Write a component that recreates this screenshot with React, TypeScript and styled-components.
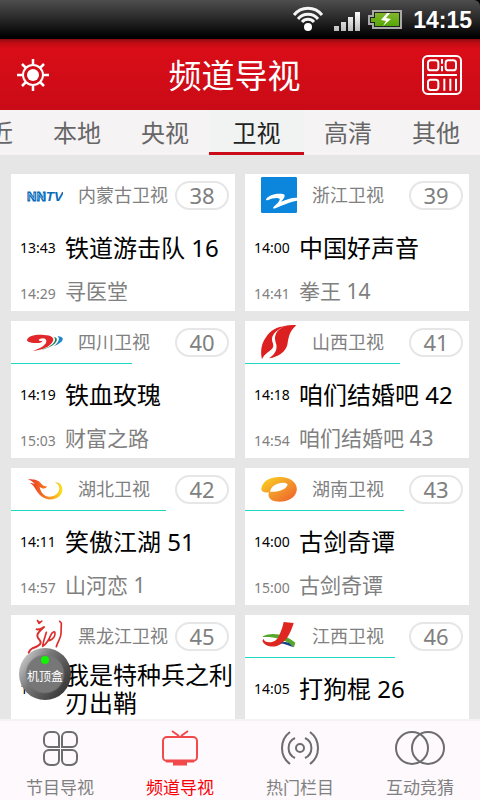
import React from "react";
import styled, { createGlobalStyle, css } from "styled-components";

const GlobalStyle = createGlobalStyle`
  * { box-sizing: border-box; }
  body { margin: 0; background: #e6e6e6; }
  button { border: 0; padding: 0; background: none; color: inherit; font: inherit; cursor: pointer; }
  svg { display: block; }
`;

const Shell = styled.div`
  position: relative;
  display: flex;
  flex-direction: column;
  height: 100vh;
  overflow: hidden;
  background: #e6e6e6;
  font-family: "Noto Sans", "Noto Sans CJK SC", sans-serif;
`;

const StatusFrame = styled.div`
  flex: none;
  background: #000;
`;

const StatusBar = styled.div`
  display: flex;
  align-items: center;
  justify-content: flex-end;
  height: 39px;
  padding-right: 8px;
  border-top-right-radius: 6px;
  background: linear-gradient(#4e4e4e, #2b2b2b 45%, #000 95%);
  color: #fff;
`;

const StatusIcons = styled.svg`
  width: 124px;
  height: 39px;
`;

const Clock = styled.time`
  font: bold 23px/38px "Liberation Sans", sans-serif;
`;

const Header = styled.header`
  display: flex;
  flex: none;
  align-items: center;
  height: 71px;
  padding: 0 18px 0 16px;
  background: linear-gradient(#8c0910, #c20c15 4px, #d90d17 10px, #c90b17);
  color: #fff;
`;

const HeaderButton = styled.button`
  flex: none;
`;

const Title = styled.h1`
  flex: 1;
  margin: 0;
  padding: 2px 3px 0 0;
  text-align: center;
  font-size: 33px;
  line-height: 40px;
  font-weight: 400;
`;

const Tabs = styled.nav`
  display: flex;
  flex: none;
  justify-content: flex-end;
  height: 45px;
  overflow: hidden;
  background: #f6f3f5;
`;

const Tab = styled.button<{ $active?: boolean }>`
  flex: 0 0 18.33%;
  padding-top: 4px;
  border-bottom: 3px solid transparent;
  color: #666;
  font-size: 24px;
  line-height: 38px;
  white-space: nowrap;
  ${(p) =>
    p.$active &&
    css`
      flex-basis: 19.8%;
      border-bottom-color: #cc0b1a;
      background: #f1f2f2;
      color: #222;
    `}
`;

const Channels = styled.main`
  display: grid;
  flex: 1;
  grid-template-columns: 1fr 1fr;
  grid-auto-rows: max-content;
  gap: 10px;
  min-height: 0;
  padding: 19px 11px 0;
  overflow-y: auto;
  scrollbar-width: none;
`;

const Card = styled.article`
  background: #fff;
`;

const CardHead = styled.div`
  display: flex;
  align-items: center;
  height: 42px;
  padding: 0 6px 0 16px;
`;

const Logo = styled.svg`
  flex: none;
  width: 36px;
  height: 36px;
  margin-right: 15px;
`;

const ChannelName = styled.h2`
  flex: 1;
  margin: 0;
  color: #808080;
  font-size: 18px;
  line-height: 26px;
  font-weight: 400;
  white-space: nowrap;
`;

const ChannelNumber = styled.span`
  width: 54px;
  border: 2px solid #e6e6e6;
  border-radius: 15px;
  color: #808080;
  font-size: 22px;
  line-height: 25px;
  text-align: center;
`;

const Progress = styled.div`
  height: 1px;
`;

const ProgressFill = styled.div`
  height: 1px;
  background: #1fd6c0;
`;

const Current = styled.div`
  display: grid;
  grid-template-columns: 45px 1fr;
  align-items: center;
  height: 62px;
  padding-left: 9px;
  color: #000;
  font-size: 24px;
  line-height: 28px;
`;

const Next = styled(Current)`
  align-items: baseline;
  height: 32px;
  color: #808080;
  font-size: 21px;
  line-height: 24px;
`;

const AirTime = styled.time`
  font-size: 14px;
`;

const BottomNav = styled.nav`
  display: grid;
  flex: none;
  grid-template-columns: repeat(4, 1fr);
  height: 81px;
  border-top: 2px solid #f5f1f4;
  background: #fdf9fd;
`;

const NavItem = styled.button<{ $active?: boolean }>`
  display: flex;
  flex-direction: column;
  align-items: center;
  gap: 8px;
  padding-top: 7px;
  color: ${(p) => (p.$active ? "#fa0005" : "#808080")};
  font-size: 17px;
  line-height: 24px;
`;

const NavIcon = styled.svg`
  width: 52px;
  height: 40px;
  fill: none;
  stroke: #6d6d6d;
  stroke-width: 2;
`;

const BoxButton = styled.button`
  position: absolute;
  bottom: 100px;
  left: 19px;
  display: flex;
  align-items: center;
  justify-content: center;
  width: 52px;
  height: 52px;
  padding-top: 4px;
  border-radius: 50%;
  background: radial-gradient(circle, #777 0 18px, transparent 20px),
    linear-gradient(125deg, #d8d8d8 5%, #777 40%, #333 90%);
  color: #fff;
  font-size: 12px;
  white-space: nowrap;

  &::before {
    content: "";
    position: absolute;
    top: 8px;
    left: 22px;
    width: 8px;
    height: 8px;
    border-radius: 50%;
    background: #12f500;
  }
`;

const logos: Record<string, React.ReactNode> = {
  nmg: (
    <g fontFamily="Liberation Sans, sans-serif" fontWeight="bold" fill="#0b6bb8">
      <text x="0" y="71" fontSize="39" stroke="#0b6bb8" strokeWidth="3">
        NN
      </text>
      <text x="56" y="71" fontSize="41" fontStyle="italic">
        TV
      </text>
      <path d="M6 68V48l17 20V48M33 68V48l17 20V48" fill="none" stroke="#b8dcf2" strokeWidth="2" />
    </g>
  ),
  zj: (
    <>
      <rect width="108" height="108" rx="4" fill="#0c86dc" />
      <path
        d="M15 67C25 52 48 49 66 51C77 54 68 66 60 74C78 67 92 61 108 62V71C86 75 69 83 43 94C35 96 34 92 41 86C49 80 57 71 56 65C48 61 31 65 22 69C17 70 14 70 15 67Z"
        fill="#fff"
      />
    </>
  ),
  sc: (
    <>
      <path
        d="M0 49C2 34 30 31 50 33C74 33 85 43 76 55C68 68 48 78 16 81C35 75 56 65 58 53C59 43 49 40 38 45C31 49 38 52 47 50C42 59 25 58 14 56C6 55 1 53 0 49Z"
        fill="#e2272a"
      />
      <path d="M79 38C89 43 84 55 72 64C65 70 54 74 43 77C65 73 84 62 89 50C92 42 86 39 79 38Z" fill="#197f55" />
      <path d="M91 37C101 43 94 56 80 67C96 60 109 51 107 43C105 38 97 36 91 37Z" fill="#2287c6" />
    </>
  ),
  sx: (
    <>
      <path
        d="M3 106C-3 84 1 56 16 38C28 20 48 8 74 6C50 15 33 30 33 46C33 55 39 61 36 70C32 80 10 88 3 106Z"
        fill="#dc2020"
      />
      <path
        d="M106 4C78 -1 54 10 45 29C39 43 43 50 46 62C49 77 41 92 24 103C53 98 74 83 79 62C83 40 85 21 106 4Z"
        fill="#dc2020"
      />
    </>
  ),
  hb: (
    <>
      <defs>
        <linearGradient id="flame">
          <stop stopColor="#e62b23" />
          <stop offset=".5" stopColor="#f57923" />
          <stop offset="1" stopColor="#f9e317" />
        </linearGradient>
      </defs>
      <path
        d="M2 25C16 25 29 25 38 33C45 42 51 47 61 46C56 56 45 53 38 48C41 64 51 77 68 77C91 76 103 57 94 42C91 38 87 36 83 36C96 31 107 43 106 58C104 78 84 88 63 85C41 81 32 65 22 49C18 42 14 39 9 36C14 36 19 38 23 39C17 31 11 28 2 25Z"
        fill="url(#flame)"
      />
    </>
  ),
  hn: (
    <>
      <defs>
        <linearGradient id="mango" x2="1" y2="1">
          <stop stopColor="#fbd61d" />
          <stop offset=".5" stopColor="#f3992b" />
          <stop offset="1" stopColor="#ee5b2c" />
        </linearGradient>
      </defs>
      <path
        d="M1 54C3 30 29 17 58 18C89 18 111 36 107 59C103 82 74 96 43 91C27 88 19 77 24 63C13 67 1 63 1 54ZM27 62C47 63 73 59 80 41C77 33 62 34 50 38C37 42 29 50 27 62Z"
        fill="url(#mango)"
        fillRule="evenodd"
      />
    </>
  ),
  hlj: (
    <g fill="none" stroke="#db302d" strokeLinecap="round" strokeLinejoin="round">
      <path d="M31 7l6 6 8-4-9 8z" strokeWidth="4" />
      <path d="M29 34c8 1 15-2 22-7-9 8-19 15-20 25-1 12 15 16 9 25-5 8-17 11-24 14-7 3-9 7-11 13" strokeWidth="6" />
      <path d="M58 43c-4 15-10 28-11 42 13-9 19-20 24-33 5-10 13-14 13-6 0 11-8 19-18 22" strokeWidth="5" />
      <path d="M98 10l5 6-1 32c-1 13-10 23-14 38" strokeWidth="5" />
    </g>
  ),
  jx: (
    <>
      <path d="M6 55C33 41 73 49 103 74L99 88C74 63 42 56 5 57Z" fill="#55a82c" />
      <path d="M19 80C50 80 58 54 65 34L70 14L76 15C72 61 54 92 19 80Z" fill="#2360a5" />
      <path
        d="M68 12L98 15C88 50 65 95 23 84C10 80 -1 68 8 63C9 76 43 80 54 53C61 38 66 24 68 12Z"
        fill="#df2722"
      />
      <path d="M56 76C70 77 83 83 98 88L87 77C77 71 67 71 56 76Z" fill="#193f85" />
    </>
  ),
};

interface Channel {
  logo: string;
  name: string;
  number: number;
  progress?: number;
  now: [string, string];
  next?: [string, string];
}

const channels: Channel[] = [
  { logo: "nmg", name: "内蒙古卫视", number: 38, now: ["13:43", "铁道游击队 16"], next: ["14:29", "寻医堂"] },
  { logo: "zj", name: "浙江卫视", number: 39, now: ["14:00", "中国好声音"], next: ["14:41", "拳王 14"] },
  { logo: "sc", name: "四川卫视", number: 40, progress: 54, now: ["14:19", "铁血玫瑰"], next: ["15:03", "财富之路"] },
  { logo: "sx", name: "山西卫视", number: 41, progress: 69, now: ["14:18", "咱们结婚吧 42"], next: ["14:54", "咱们结婚吧 43"] },
  { logo: "hb", name: "湖北卫视", number: 42, progress: 69, now: ["14:11", "笑傲江湖 51"], next: ["14:57", "山河恋 1"] },
  { logo: "hn", name: "湖南卫视", number: 43, progress: 71, now: ["14:00", "古剑奇谭"], next: ["15:00", "古剑奇谭"] },
  { logo: "hlj", name: "黑龙江卫视", number: 45, now: ["14:04", "我是特种兵之利刃出鞘"] },
  { logo: "jx", name: "江西卫视", number: 46, progress: 67, now: ["14:05", "打狗棍 26"] },
];

function ChannelCard({ logo, name, number, progress = 0, now, next }: Channel) {
  return (
    <Card>
      <CardHead>
        <Logo viewBox="0 0 108 108" aria-hidden="true">{logos[logo]}</Logo>
        <ChannelName>{name}</ChannelName>
        <ChannelNumber>{number}</ChannelNumber>
      </CardHead>
      <Progress>
        <ProgressFill style={{ width: `${progress}%` }} />
      </Progress>
      <Current>
        <AirTime>{now[0]}</AirTime>
        <span>{now[1]}</span>
      </Current>
      <Next>
        {next && (
          <>
            <AirTime>{next[0]}</AirTime>
            <span>{next[1]}</span>
          </>
        )}
      </Next>
    </Card>
  );
}

const tabs = ["最近", "本地", "央视", "卫视", "高清", "其他"];

const navItems = [
  {
    label: "节目导视",
    icon: (
      <>
        <path d="M25 19H15a5 5 0 0 1-5-5v-4a6 6 0 0 1 6-6h4a5 5 0 0 1 5 5z" />
        <path d="M28 19V9a5 5 0 0 1 5-5h4a6 6 0 0 1 6 6v4a5 5 0 0 1-5 5z" />
        <path d="M25 22v10a5 5 0 0 1-5 5h-4a6 6 0 0 1-6-6v-4a5 5 0 0 1 5-5z" />
        <path d="M28 22h10a5 5 0 0 1 5 5v4a6 6 0 0 1-6 6h-4a5 5 0 0 1-5-5z" />
      </>
    ),
  },
  {
    label: "频道导视",
    icon: (
      <g stroke="#f2494b">
        <rect x="9" y="9" width="34" height="24" rx="4" />
        <path d="M18 3l7 5M34 3l-7 5" />
        <path d="M12 33h28M19 36h14" strokeWidth="3" />
      </g>
    ),
  },
  {
    label: "热门栏目",
    icon: (
      <>
        <circle cx="26" cy="20" r="4" />
        <path d="M21 10a11 11 0 0 0 0 20M31 10a11 11 0 0 1 0 20M16 4a20 20 0 0 0 0 32M36 4a20 20 0 0 1 0 32" />
      </>
    ),
  },
  {
    label: "互动竞猜",
    icon: (
      <>
        <circle cx="18" cy="20" r="16" />
        <circle cx="34" cy="20" r="16" />
      </>
    ),
  },
];

export default function App() {
  return (
    <Shell>
      <GlobalStyle />
      <StatusFrame>
        <StatusBar>
          <StatusIcons viewBox="0 0 124 39" aria-hidden="true">
            <defs>
              <linearGradient id="bar" x2="0" y2="1">
                <stop stopColor="#fff" />
                <stop offset="1" stopColor="#bbb" />
              </linearGradient>
              <linearGradient id="charge" x2="0" y2="1">
                <stop stopColor="#83b62c" />
                <stop offset="1" stopColor="#55a605" />
              </linearGradient>
            </defs>
            <g fill="none" stroke="#f5f5f5" strokeWidth="3">
              <path d="M5 15a18 18 0 0 1 28 0M9 19a13 13 0 0 1 20 0M13 22a8 8 0 0 1 12 0" />
            </g>
            <circle cx="19" cy="27" r="4" fill="#fff" />
            <path d="M45 26h5v5h-5zM52 22h5v9h-5zM59 17h5v14h-5zM66 12h5v19h-5z" fill="url(#bar)" />
            <path d="M83 10h30v19H83v-4h-4V15h4z" fill="#aaa" />
            <path d="M85 12h26v15H85v-4h-4v-6h4z" fill="#222" />
            <path d="M86 13h24v13H86v-4h-4v-4h4z" fill="url(#charge)" />
            <path d="M98 13l-6 7 5 1-3 5 8-7-5-1 4-5z" fill="#fff" />
          </StatusIcons>
          <Clock>14:15</Clock>
        </StatusBar>
      </StatusFrame>
      <Header>
        <HeaderButton aria-label="设置">
          <svg width="34" height="34" viewBox="-17 -17 34 34" fill="none" stroke="#fff" strokeWidth="2">
            <circle r="6" fill="#fff" stroke="none" />
            <circle r="10" />
            <path d="M0-16v5M0 16v-5M-16 0h5M16 0h-5M-11-11l4 4M11-11l-4 4M-11 11l4-4M11 11l-4-4" strokeWidth="2.5" />
          </svg>
        </HeaderButton>
        <Title>频道导视</Title>
        <HeaderButton aria-label="扫描二维码">
          <svg width="40" height="40" viewBox="0 0 120 120" fill="none" stroke="#fff" strokeWidth="6">
            <rect x="3" y="3" width="114" height="114" rx="14" />
            <rect x="18" y="16" width="31" height="30" rx="8" />
            <rect x="71" y="16" width="31" height="30" rx="8" />
            <rect x="18" y="74" width="31" height="31" rx="8" />
            <path d="M60 12v14M60 33v16M15 60h90M67 71v36M85 71v36M102 71v36" />
          </svg>
        </HeaderButton>
      </Header>
      <Tabs aria-label="频道分类">
        {tabs.map((label) => (
          <Tab key={label} $active={label === "卫视"}>{label}</Tab>
        ))}
      </Tabs>
      <Channels>
        {channels.map((c) => (
          <ChannelCard key={c.number} {...c} />
        ))}
      </Channels>
      <BottomNav aria-label="主导航">
        {navItems.map(({ label, icon }) => (
          <NavItem key={label} $active={label === "频道导视"}>
            <NavIcon viewBox="0 0 52 40" aria-hidden="true">{icon}</NavIcon>
            {label}
          </NavItem>
        ))}
      </BottomNav>
      <BoxButton>机顶盒</BoxButton>
    </Shell>
  );
}
